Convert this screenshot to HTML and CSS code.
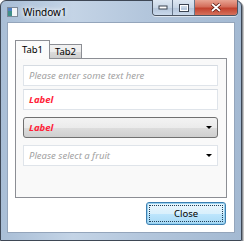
FILE: index.html
```html
<!DOCTYPE html>
<html>
<head>
<meta charset="utf-8">
<link rel="stylesheet" href="styles.css">
</head>
<body>
<div class="window">
  <div class="titlebar">
    <svg class="app-icon" width="11" height="10" viewBox="0 0 11 10">
      <rect x="0.5" y="0.5" width="10" height="9" fill="#f4f6f8" stroke="#7d8a99"/>
      <rect x="1" y="1" width="4" height="8" fill="#3f8f8a"/>
      <rect x="1" y="1" width="4" height="3" fill="#4f7fc0"/>
    </svg>
    <span class="title">Window1</span>
    <div class="caption-buttons">
      <div class="cbtn cbtn-min">
        <svg width="10" height="5" viewBox="0 0 10 5"><rect x="1" y="1" width="8" height="3" fill="#fff" stroke="#3b4452" stroke-width="1"/></svg>
      </div>
      <div class="cbtn cbtn-max">
        <svg width="10" height="8" viewBox="0 0 10 8"><rect x="1" y="1" width="8" height="6" fill="none" stroke="#3b4452" stroke-width="2"/><rect x="1.5" y="1.5" width="7" height="5" fill="none" stroke="#fff" stroke-width="1"/></svg>
      </div>
      <div class="cbtn cbtn-close">
        <svg width="12" height="9" viewBox="0 0 12 9"><path d="M2 1 L10 8 M10 1 L2 8" stroke="#5a1a12" stroke-width="3.4"/><path d="M2 1 L10 8 M10 1 L2 8" stroke="#fff" stroke-width="1.8"/></svg>
      </div>
    </div>
  </div>
  <div class="client">
    <div class="tabs">
      <div class="tab tab-active">Tab1</div>
      <div class="tab">Tab2</div>
    </div>
    <div class="panel">
      <div class="field placeholder">Please enter some text here</div>
      <div class="field label-red">Label</div>
      <div class="combo combo-solid"><span class="label-red">Label</span><span class="arrow"></span></div>
      <div class="combo combo-plain"><span class="placeholder">Please select a fruit</span><span class="arrow"></span></div>
    </div>
    <div class="footer">
      <div class="btn-close"><span>Close</span></div>
    </div>
  </div>
</div>
</body>
</html>
```

FILE: styles.css
```css
* { box-sizing: border-box; }
html, body { margin: 0; padding: 0; background: #ffffff; }
body {
  font-family: "Noto Sans", "Open Sans", sans-serif;
  font-size: 9.5px;
  color: #000;
}
.window {
  width: 242px;
  height: 241px;
  border: 1px solid #3e4755;
  border-radius: 6px 6px 0 0;
  background: linear-gradient(90deg, #a9bed6 0%, #c4d4e6 30%, #b3c6dc 60%, #a3b9d2 100%);
  display: flex;
  flex-direction: column;
  box-shadow: 1px 1px 0 #8a8f96, 2px 2px 1px rgba(0,0,0,0.25);
}
.titlebar {
  height: 21px;
  display: flex;
  align-items: center;
  padding: 0 3px 0 6px;
}
.app-icon { flex: none; margin-top: 1px; }
.title {
  margin-left: 5px;
  font-size: 10px;
  text-shadow: 0 0 4px #fff, 0 0 6px #fff;
  margin-top: 1px;
}
.caption-buttons {
  margin-left: auto;
  align-self: flex-start;
  margin-top: -1px;
  display: flex;
  height: 16px;
  border: 1px solid #4b5563;
  border-top: none;
  border-radius: 0 0 4px 4px;
  overflow: hidden;
  box-shadow: 0 1px 0 rgba(255,255,255,0.6);
}
.cbtn {
  display: flex;
  align-items: center;
  justify-content: center;
  height: 100%;
  background: linear-gradient(180deg, #dde7f2 0%, #c8d6e6 50%, #b4c5da 51%, #cad9eb 100%);
}
.cbtn-min { width: 20px; border-right: 1px solid #66768a; }
.cbtn-max { width: 22px; border-right: 1px solid #66768a; }
.cbtn-close {
  width: 42px;
  background: linear-gradient(180deg, #e8a493 0%, #d46d5a 45%, #c2422e 55%, #d5715c 100%);
}
.client {
  flex: 1;
  margin: 0 6px 7px 6px;
  background: #ffffff;
  border: 1px solid #94a5bb;
  padding: 17px 7px 7px 7px;
  display: flex;
  flex-direction: column;
}
.tabs {
  display: flex;
  align-items: flex-end;
  height: 19px;
  margin-bottom: -1px;
  position: relative;
  z-index: 1;
}
.tab {
  height: 15px;
  width: 32px;
  border: 1px solid #8c8e94;
  border-left: none;
  background: linear-gradient(180deg, #f2f2f2 0%, #ebebeb 50%, #dddddd 51%, #cfcfcf 100%);
  display: flex;
  align-items: center;
  justify-content: center;
  padding-bottom: 1px;
}
.tab-active {
  height: 19px;
  width: 35px;
  border-left: 1px solid #8c8e94;
  border-bottom: none;
  background: #fbfbfb;
  padding-bottom: 2px;
}
.panel {
  height: 140px;
  border: 1px solid #8c8e94;
  background: #f9f9f9;
  padding: 6px 8px 0 7px;
  display: flex;
  flex-direction: column;
}
.field, .combo {
  height: 21px;
  display: flex;
  align-items: center;
  padding-left: 5px;
  flex: none;
}
.field {
  background: #fff;
  border: 1px solid #dfe4ea;
  border-top-color: #d5dbe2;
}
.field + .field { margin-top: 3px; }
.combo { margin-top: 7px; justify-content: space-between; padding-right: 5px; }
.combo-solid {
  border: 1px solid #707070;
  border-radius: 3px;
  background: linear-gradient(180deg, #f3f3f3 0%, #ebebeb 50%, #dddddd 51%, #cfcfcf 100%);
}
.combo-plain {
  background: #fff;
  border: 1px solid #dfe4ea;
}
.placeholder { color: #a2a2a2; font-style: italic; }
.label-red { color: #ff2238; font-style: italic; font-weight: bold; }
.arrow {
  width: 0;
  height: 0;
  border-left: 3px solid transparent;
  border-right: 3px solid transparent;
  border-top: 3px solid #000;
}
.footer {
  margin-top: 4px;
  display: flex;
  justify-content: flex-end;
}
.btn-close {
  width: 80px;
  height: 23px;
  margin-right: 1px;
  border: 1px solid #3c7fb1;
  border-radius: 3px;
  background: linear-gradient(180deg, #eaf6fd 0%, #d9f0fc 50%, #bee6fd 51%, #a7d9f5 100%);
  box-shadow: inset 0 0 0 1px #98d1ef;
  padding: 2px;
  display: flex;
}
.btn-close span {
  flex: 1;
  border: 1px dotted #1f3f58;
  display: flex;
  align-items: center;
  justify-content: center;
  color: #000;
}
```
